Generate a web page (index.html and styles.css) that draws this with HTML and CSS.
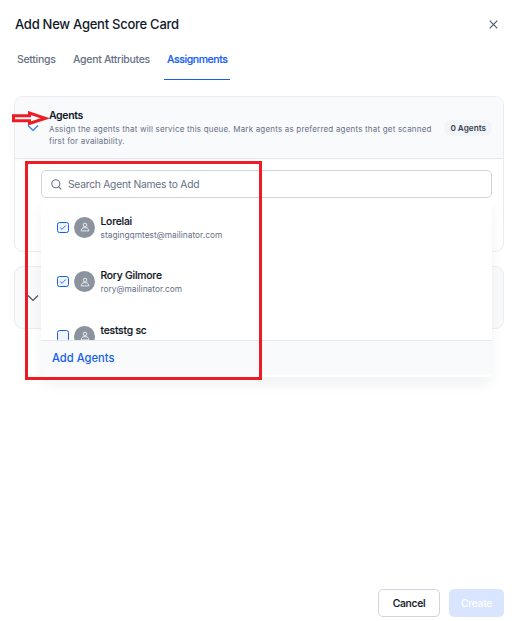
FILE: index.html
```html
<!DOCTYPE html>
<html lang="en">
<head>
<meta charset="utf-8">
<title>Add New Agent Score Card</title>
<link rel="stylesheet" href="styles.css">
</head>
<body>
<svg class="defs" width="0" height="0">
  <symbol id="check" viewBox="0 0 12 11"><rect x=".5" y=".5" width="11" height="10" rx="2" fill="#eff4ff" stroke="#155eef"/><path d="M3.2 5.6 5 7.3 8.8 3.5" fill="none" stroke="#155eef" stroke-width=".9"/></symbol>
  <symbol id="person" viewBox="0 0 10 10"><circle cx="5" cy="3" r="1.8"/><path d="M1.2 8.900c.1-2 1.300-3.200 2.800-3.200h2c1.500 0 2.700 1.200 2.800 3.200z"/></symbol>
</svg>
<main class="dialog">
  <header class="head">
    <h1>Add New Agent Score Card</h1>
    <svg class="close" width="9" height="9" viewBox="0 0 9 9"><path d="M.7.7l7.600 7.600M8.300.7.7 8.300"/></svg>
  </header>
  <nav class="tabs">
    <a class="tab settings">Settings</a>
    <a class="tab attributes">Agent Attributes</a>
    <a class="tab active">Assignments</a>
  </nav>
  <section class="card agents">
    <div class="card-head">
      <svg class="chevron blue" width="12" height="8" viewBox="0 0 12 8"><path d="M1 1.500l5 5 5-5"/></svg>
      <div class="card-copy">
        <h2>Agents</h2>
        <p>Assign the agents that will service this queue. Mark agents as preferred agents that get scanned<br>first for availability.</p>
      </div>
      <span class="pill">0 Agents</span>
    </div>
    <div class="card-body">
      <div class="search">
        <svg width="11" height="11" viewBox="0 0 11 11"><circle cx="4.800" cy="4.800" r="4"/><path d="M7.800 7.800l2.500 2.500"/></svg>
        <span>Search Agent Names to Add</span>
      </div>
      <div class="menu">
        <div class="list">
          <div class="row">
            <svg class="box" width="12" height="11"><use href="#check"/></svg>
            <span class="avatar"><svg width="10" height="10"><use href="#person"/></svg></span>
            <div class="who"><b>Lorelai</b><small>stagingqmtest@mailinator.com</small></div>
          </div>
          <div class="row">
            <svg class="box" width="12" height="11"><use href="#check"/></svg>
            <span class="avatar"><svg width="10" height="10"><use href="#person"/></svg></span>
            <div class="who"><b>Rory Gilmore</b><small>rory@mailinator.com</small></div>
          </div>
          <div class="row">
            <svg class="box" width="12" height="12" viewBox="0 0 12 12"><rect x=".5" y=".5" width="11" height="11" rx="2" fill="#eff4ff" stroke="#155eef"/></svg>
            <span class="avatar"><svg width="10" height="10"><use href="#person"/></svg></span>
            <div class="who"><b>teststg sc</b></div>
          </div>
        </div>
        <div class="add"><span>Add Agents</span></div>
      </div>
    </div>
  </section>
  <section class="card collapsed">
    <svg class="chevron" width="12" height="8" viewBox="0 0 12 8"><path d="M1 1.500l5 5 5-5"/></svg>
  </section>
  <footer class="actions">
    <button class="cancel">Cancel</button>
    <button class="create">Create</button>
  </footer>
</main>
<div class="highlight"></div>
<svg class="arrow" width="38" height="15" viewBox="0 0 38 15"><path d="M2.500 4.800h16V2l16 5.300-16 5.200V9.800h-16z"/></svg>
</body>
</html>
```
FILE: styles.css
```css
* { box-sizing: border-box; }
body { margin: 0; background: #fff; font-family: Inter, "Liberation Sans", sans-serif; color: #101828; }
h1, h2, p { margin: 0; }
svg { display: block; flex: none; }
.defs { position: absolute; }
.dialog { height: 621px; padding: 0 16px 4px 14px; display: flex; flex-direction: column; }
.head { height: 48px; display: flex; align-items: center; justify-content: space-between; padding: 0 6px 0 1px; }
h1 { font-size: 13px; font-weight: 500; line-height: 18px; letter-spacing: -.26px; }
.close { fill: none; stroke: #475467; stroke-width: 1.100; }
.tabs { height: 32px; display: flex; font-size: 10.500px; letter-spacing: -.3px; font-weight: 500; color: #667085; }
.tab { height: 32px; line-height: 23px; padding: 0 3px; white-space: nowrap; }
.settings { width: 56px; }
.attributes { width: 94px; }
.active { width: 66px; letter-spacing: -.42px; color: #155eef; border-bottom: 1px solid #155eef; -webkit-text-stroke: .15px; }
.card { border: 1px solid #eaecf0; border-radius: 9px; flex: none; }
.agents { margin-top: 16px; height: 156px; }
.card-head { height: 62px; display: flex; align-items: center; background: #f9fafb; border-bottom: 1px solid #e4e7ec; border-radius: 8px 8px 0 0; padding: 0 11px 0 12px; }
.chevron { fill: none; stroke: #475467; stroke-width: 1.200; }
.blue { stroke: #2e78e8; }
.card-copy { margin-left: 10px; flex: 1; white-space: nowrap; }
h2 { font-size: 10.500px; line-height: 14px; font-weight: 600; letter-spacing: -.36px; }
p { font-size: 8px; line-height: 12px; letter-spacing: .19px; color: #667085; }
.pill { height: 16px; padding: 0 6px; border-radius: 8px; background: #f2f4f7; color: #344054; font-size: 8.200px; font-weight: 600; line-height: 16px; white-space: nowrap; }
.card-body { padding: 11px 11px 0 26px; }
.search { height: 28px; border: 1px solid #d0d5dd; border-radius: 5px; display: flex; align-items: center; gap: 7px; padding-left: 9px; font-size: 10.300px; letter-spacing: -.26px; color: #667085; }
.search span { margin-left: -1px; }
.search svg { fill: none; stroke: #667085; stroke-width: 1.100; }
.menu { position: relative; z-index: 1; height: 179px; background: #fff; border-radius: 0 0 4px 4px; box-shadow: 0 8px 14px -2px rgba(16,24,40,.07); }
.list { height: 142px; overflow: hidden; padding-top: 2px; }
.row { height: 54.500px; display: flex; align-items: center; padding-left: 16px; }
.avatar { width: 21px; height: 21px; margin-left: 5px; border-radius: 50%; background: #8b949e; display: grid; place-items: center; }
.avatar svg { fill: none; stroke: #fff; stroke-width: .8; }
.who { margin-left: 5.500px; height: 27px; display: flex; flex-direction: column; }
.who b { font-size: 10.300px; line-height: 15px; font-weight: 500; letter-spacing: -.2px; -webkit-text-stroke: .15px; }
.who small { font-size: 8.300px; line-height: 12px; letter-spacing: .03px; color: #667085; }
.add { height: 35px; background: #f9fafb; border-top: 1px solid #e4e7ec; padding-left: 11px; font-size: 11.200px; line-height: 35px; font-weight: 500; color: #155eef; }
.collapsed { height: 63px; margin-top: 14px; background: #f9fafb; display: flex; align-items: center; padding-left: 12px; }
.actions { margin-top: auto; display: flex; justify-content: flex-end; gap: 9px; }
button { height: 28px; padding: 0; font: 500 10.300px Inter, sans-serif; letter-spacing: -.3px; border-radius: 5px; }
.cancel { width: 62px; background: #fff; border: 1px solid #d0d5dd; color: #101828; -webkit-text-stroke: .15px; }
.create { width: 55px; border: 0; background: #d9e5ff; color: #fff; }
.highlight { position: absolute; z-index: 2; left: 25px; top: 161px; width: 237px; height: 219px; border: 3px solid #ed1c24; }
.arrow { position: absolute; left: 11px; top: 111px; fill: none; stroke: #ed1c24; stroke-width: 3; }
```
